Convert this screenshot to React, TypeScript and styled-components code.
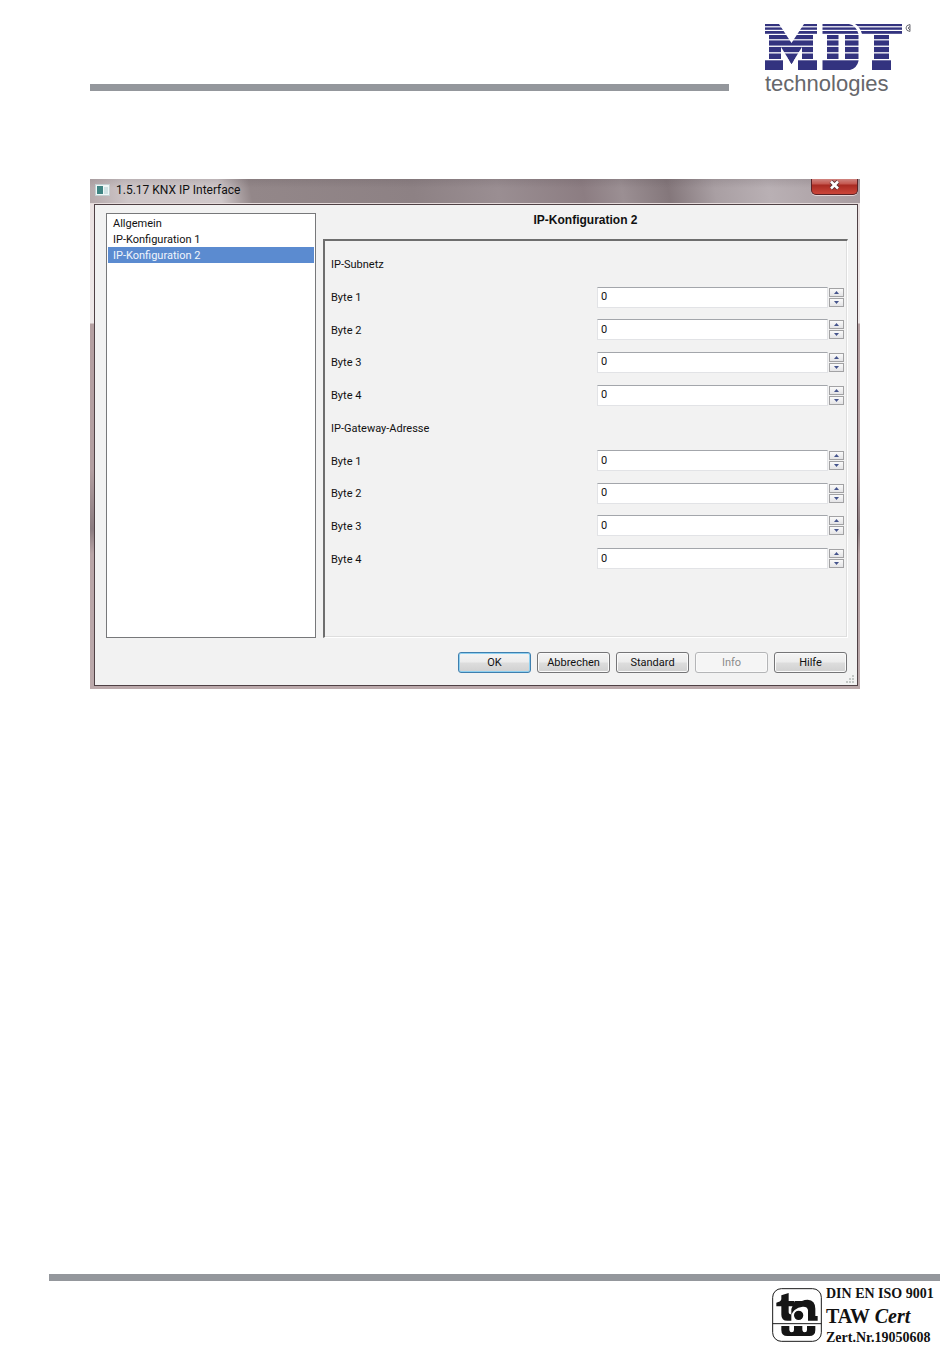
import React, { useState } from "react";
import styled, { createGlobalStyle, css } from "styled-components";

const GlobalStyle = createGlobalStyle`
  * { box-sizing: border-box; }
  body {
    margin: 0;
    background: #fff;
    color: #111;
    font-family: "Liberation Sans", Arial, sans-serif;
    font-size: 11px;
    line-height: 16px;
  }
  button, input { font: inherit; color: inherit; }
`;

const Page = styled.div`
  display: flex;
  flex-direction: column;
  min-height: 100vh;
`;

const Header = styled.header`
  display: flex;
  align-items: flex-start;
  gap: 36px;
  padding: 24px 39px 0 90px;
`;

const Rule = styled.div`
  height: 7px;
  background: #94979c;
`;

const HeaderRule = styled(Rule)`
  flex: 1;
  margin-top: 60px;
`;

const Brand = styled.div`
  width: 146px;
`;

const BrandMark = styled.svg`
  display: block;
  width: 146px;
  height: 46px;
`;

const BrandName = styled.div`
  color: #66676b;
  font-size: 22px;
  line-height: 28px;
`;

const Main = styled.main`
  padding: 81px 90px 48px;
`;

const Window = styled.section`
  display: flex;
  flex-direction: column;
  padding: 0 2px 3px 4px;
  font-family: Roboto, "Liberation Sans", sans-serif;
  background: linear-gradient(#e9dfdf 0, #efe9e9 144px, #b5a0a2 145px, #b39fa1 290px, #8b7c80 350px, #b9a5a7 375px, #bba9ab 100%);
`;

const TitleBar = styled.div`
  display: flex;
  align-items: flex-start;
  height: 25px;
  margin: 0 -2px 0 -4px;
  padding: 0 2px 0 5px;
  border-bottom: 1px solid #e6dcdc;
  background:
    linear-gradient(rgba(70, 60, 66, 0.14), rgba(255, 255, 255, 0) 9px),
    linear-gradient(80deg, #b4a8aa 0, #cec6c8 5%, #cfc7c9 17%, #938789 21%, #8d8184 42%, #9a8e92 53%, #8c7d82 64%, #9b8f93 69%, #84777b 75%, #a99fa3 81%, #b9b0b4 88%, #a89ca0 100%);
`;

const TitleText = styled.h1`
  flex: 1;
  margin: 0 0 0 6px;
  padding-top: 3px;
  font-size: 12px;
  font-weight: 400;
  line-height: 16px;
`;

const WindowIcon = styled.svg`
  width: 15px;
  height: 12px;
  margin-top: 5px;
`;

const CloseButton = styled.button`
  display: flex;
  align-items: center;
  justify-content: center;
  width: 47px;
  height: 16px;
  padding: 0 0 3px;
  border: 1px solid #5a2226;
  border-top: 0;
  border-radius: 0 0 5px 5px;
  background: linear-gradient(#cf8580 0, #c4564e 5px, #a82a22 6px, #c84337 14px);
  box-shadow: 0 1px 0 #e3d5d6;
`;

const Client = styled.div`
  display: flex;
  flex-direction: column;
  padding: 8px 9px 12px 11px;
  position: relative;
  border: 1px solid #4f4145;
  background: #f2f2f2;
`;

const Columns = styled.div`
  display: flex;
  gap: 7px;
`;

const PageList = styled.nav`
  display: flex;
  flex-direction: column;
  width: 210px;
  min-height: 425px;
  padding: 1px;
  border: 1px solid #77787a;
  background: #fff;
`;

const PageItem = styled.button<{ $selected: boolean }>`
  height: 16px;
  padding: 1px 5px 0;
  border: 0;
  text-align: left;
  line-height: 16px;
  background: ${(p) => (p.$selected ? "#5b8bd0" : "transparent")};
  color: ${(p) => (p.$selected ? "#f0f5fc" : "#111")};
`;

const Settings = styled.div`
  display: flex;
  flex: 1;
  flex-direction: column;
`;

const PanelTitle = styled.h2`
  margin: 0;
  height: 26px;
  font-family: "Liberation Sans", Arial, sans-serif;
  font-size: 12px;
  line-height: 14px;
  text-align: center;
`;

const Panel = styled.form`
  flex: 1;
  padding: 7px 3px 0 6px;
  border: 1px solid #fff;
  border-top: 2px solid #6e6e6e;
  border-left: 2px solid #6e6e6e;
  box-shadow: inset -1px -1px 0 #dedede;
`;

const Fields = styled.div`
  display: grid;
  grid-auto-rows: 1fr;
  height: 327px;
`;

const Row = styled.div`
  display: grid;
  grid-template-columns: 265px 1fr 15px;
  column-gap: 1px;
  align-items: center;
`;

const FieldLabel = styled.label`
  padding-top: 2px;
`;

const GroupLabel = styled.span`
  padding-top: 2px;
`;

const NumberInput = styled.input`
  width: 100%;
  height: 21px;
  padding: 0 3px 1px;
  border: 1px solid #e2e3e6;
  border-top-color: #a3a6ab;
  border-radius: 0;
  background: #fff;
  outline: 0;
  appearance: textfield;
  &::-webkit-inner-spin-button { appearance: none; margin: 0; }
`;

const Stepper = styled.div`
  display: grid;
  gap: 1px;
`;

const StepButton = styled.button`
  display: flex;
  align-items: center;
  justify-content: center;
  height: 9px;
  padding: 0;
  border: 1px solid #a2a2a4;
  background: linear-gradient(#fafafa, #e4e4e6);
`;

const Actions = styled.div`
  display: flex;
  justify-content: flex-end;
  gap: 6px;
  padding: 14px 1px 0 0;
`;

const ActionButton = styled.button<{ $primary?: boolean }>`
  width: 73px;
  height: 21px;
  padding: 1px 0 0;
  border: 1px solid #757577;
  border-radius: 3px;
  background: linear-gradient(#f4f4f4 0, #ececec 9px, #dddddd 10px, #d0d0d0 100%);
  box-shadow: inset 0 0 0 1px #fafafa;
  ${(p) =>
    p.$primary &&
    css`
      border-color: #3f7fae;
      box-shadow: inset 0 0 0 1px #8fd0f0;
    `}
  &:disabled {
    border-color: #b4b5b7;
    background: #f5f5f5;
    color: #8b8b8b;
  }
`;

const ResizeGrip = styled.svg`
  position: absolute;
  right: 2px;
  bottom: 1px;
  width: 10px;
  height: 10px;
`;

const Footer = styled.footer`
  margin-top: auto;
  padding: 0 10px 21px 49px;
`;

const Certificate = styled.div`
  display: flex;
  justify-content: flex-end;
  gap: 4px;
  padding: 2px 7px 0 0;
`;

const CertMark = styled.svg`
  width: 50px;
  height: 54px;
  margin-top: 5px;
`;

const CertText = styled.div`
  width: 107px;
  font-family: "Liberation Serif", "Times New Roman", serif;
  font-size: 14px;
  font-weight: 700;
  line-height: 22px;
  white-space: nowrap;
`;

const CertName = styled.div`
  font-size: 20px;
`;

const PAGES = ["Allgemein", "IP-Konfiguration 1", "IP-Konfiguration 2"];
const GROUPS = ["IP-Subnetz", "IP-Gateway-Adresse"];
const BYTES = [1, 2, 3, 4];

function Arrow({ down = false }: { down?: boolean }) {
  return (
    <svg width="5" height="3" viewBox="0 0 5 3" aria-hidden="true">
      <path d={down ? "M0 0h5L2.500 3z" : "M0 3h5L2.500 0z"} fill="#45548c" />
    </svg>
  );
}

function ByteField({ group, index }: { group: string; index: number }) {
  const [value, setValue] = useState(0);
  const id = `${group}-${index}`;
  const step = (by: number) => setValue((v) => Math.min(255, Math.max(0, v + by)));
  return (
    <Row>
      <FieldLabel htmlFor={id}>Byte {index}</FieldLabel>
      <NumberInput
        id={id}
        type="number"
        min={0}
        max={255}
        value={value}
        onChange={(e) => setValue(Number(e.target.value))}
      />
      <Stepper>
        <StepButton type="button" aria-label="Erhöhen" onClick={() => step(1)}>
          <Arrow />
        </StepButton>
        <StepButton type="button" aria-label="Verringern" onClick={() => step(-1)}>
          <Arrow down />
        </StepButton>
      </Stepper>
    </Row>
  );
}

function MdtLogo() {
  const gaps = [
    [2.2, 1.2],
    [5.8, 1.2],
    [9.8, 1.2],
    [15.2, 1.2],
    [21.6, 1.3],
    [28.2, 1.3],
    [35, 1.3],
  ];
  return (
    <BrandMark viewBox="0 0 146 46" role="img" aria-label="MDT">
      <g fill="#33337f">
        <path d="M0 0H14L26.500 19L39 0H52V10H48V36H52V46H33V36H37V23L26.500 40L16 23V36H18V46H0V36H4V10H0Z" />
        <path
          fillRule="evenodd"
          d="M57.500 0H84Q91 1 93.500 10V37Q92 44 85 46H57.500V36H62V10H57.500ZM73.500 10.500V36H80V10.500Z"
        />
        <path d="M90 0H137V10H124V36H126V46H107V36H109V10H97Q95 3 90 0Z" />
      </g>
      {gaps.map(([y, h]) => (
        <rect key={y} x="0" y={y} width="138" height={h} fill="#fff" />
      ))}
      <path d="M22.800 34L26.500 40L30.200 34Z" fill="#33337f" />
      <path d="M145 .5Q141 1 141 4T145 7.500ZM145 2.500L143 4L145 6" fill="none" stroke="#4b4b55" strokeWidth=".8" />
    </BrandMark>
  );
}

function CertLogo() {
  return (
    <CertMark viewBox="12 12 150 162" aria-hidden="true">
      <rect x="14" y="14" width="146" height="158" rx="26" fill="#fff" stroke="#1c1c1c" strokeWidth="3" />
      <g fill="#151515">
        <path d="M40 34L62 27V51H78V67H62V84Q62 91 70 91V110H58Q40 110 40 92V67H25V56Q38 54 40 46Z" />
        <path d="M80 51H102Q110 47 119 47Q142 49 142 74V96H149V110H120V78Q118 67 104 68Q90 69 80 78Q74 84 70 92V75Z" />
        <circle cx="92" cy="94" r="16" stroke="#fff" strokeWidth="4" />
        <path d="M40 126H64V138Q65 145 71 145Q78 145 78 138V126H103V138Q104 145 110 145Q117 145 117 138V126H142V138Q142 156 124 156H58Q40 156 40 138Z" />
      </g>
      <path d="M14 119H160" stroke="#1c1c1c" strokeWidth="3" />
    </CertMark>
  );
}

export default function App() {
  const [page, setPage] = useState(2);
  return (
    <Page>
      <GlobalStyle />
      <Header>
        <HeaderRule />
        <Brand>
          <MdtLogo />
          <BrandName>technologies</BrandName>
        </Brand>
      </Header>

      <Main>
        <Window>
          <TitleBar>
            <WindowIcon viewBox="0 0 15 12" aria-hidden="true">
              <rect x=".5" y=".5" width="14" height="11" fill="#f0f7f7" stroke="#c4d0d2" />
              <rect x="2" y="2" width="6" height="8" fill="#3f8583" />
              <rect x="9" y="3" width="4" height="7" fill="#cfe2e4" />
            </WindowIcon>
            <TitleText>1.5.17 KNX IP Interface</TitleText>
            <CloseButton type="button" aria-label="Schließen">
              <svg width="13" height="10" viewBox="0 0 13 10" aria-hidden="true">
                <path d="M3 1.500L10 8.500M10 1.500L3 8.500" stroke="#5b3034" strokeWidth="4.400" />
                <path d="M3 1.500L10 8.500M10 1.500L3 8.500" stroke="#fff" strokeWidth="2.600" />
              </svg>
            </CloseButton>
          </TitleBar>

          <Client>
            <Columns>
              <PageList aria-label="Parameterseiten">
                {PAGES.map((name, i) => (
                  <PageItem key={name} type="button" $selected={i === page} onClick={() => setPage(i)}>
                    {name}
                  </PageItem>
                ))}
              </PageList>
              <Settings>
                <PanelTitle>{PAGES[page]}</PanelTitle>
                <Panel id="settings" onSubmit={(e) => e.preventDefault()}>
                  <Fields>
                    {GROUPS.map((group) => (
                      <React.Fragment key={group}>
                        <Row>
                          <GroupLabel>{group}</GroupLabel>
                        </Row>
                        {BYTES.map((n) => (
                          <ByteField key={n} group={group} index={n} />
                        ))}
                      </React.Fragment>
                    ))}
                  </Fields>
                </Panel>
              </Settings>
            </Columns>
            <Actions>
              <ActionButton type="submit" form="settings" $primary>
                OK
              </ActionButton>
              <ActionButton type="button">Abbrechen</ActionButton>
              <ActionButton type="button">Standard</ActionButton>
              <ActionButton type="button" disabled>
                Info
              </ActionButton>
              <ActionButton type="button">Hilfe</ActionButton>
            </Actions>
            <ResizeGrip viewBox="0 0 10 10" aria-hidden="true">
              <path
                d="M7 1h2v2h-2zM7 4h2v2h-2zM7 7h2v2h-2zM4 4h2v2h-2zM4 7h2v2h-2zM1 7h2v2h-2z"
                fill="#c3c7c5"
              />
            </ResizeGrip>
          </Client>
        </Window>
      </Main>

      <Footer>
        <Rule />
        <Certificate>
          <CertLogo />
          <CertText>
            <div>DIN EN ISO 9001</div>
            <CertName>
              TAW <em>Cert</em>
            </CertName>
            <div>Zert.Nr.19050608</div>
          </CertText>
        </Certificate>
      </Footer>
    </Page>
  );
}
